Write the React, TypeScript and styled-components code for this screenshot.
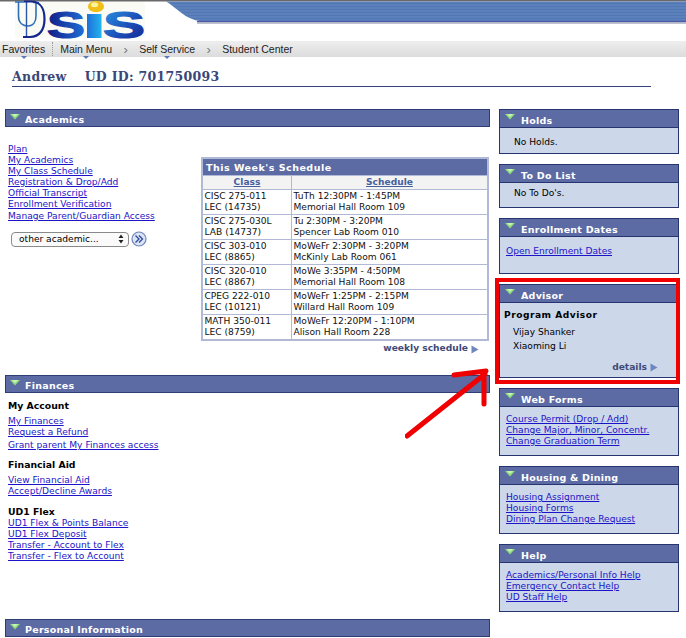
import React from 'react';
import styled, { createGlobalStyle } from 'styled-components';

const GlobalStyle = createGlobalStyle`
  html, body {
    margin: 0;
    padding: 0;
    background: #fff;
    overflow: hidden;
  }
  body {
    font-family: "DejaVu Sans", Verdana, sans-serif;
    font-size: 9.1px;
    line-height: 11px;
    color: #000;
  }
`;

const scheduleRows = [
  ['CISC 275-011', 'LEC (14735)', 'TuTh 12:30PM - 1:45PM', 'Memorial Hall Room 109'],
  ['CISC 275-030L', 'LAB (14737)', 'Tu 2:30PM - 3:20PM', 'Spencer Lab Room 010'],
  ['CISC 303-010', 'LEC (8865)', 'MoWeFr 2:30PM - 3:20PM', 'McKinly Lab Room 061'],
  ['CISC 320-010', 'LEC (8867)', 'MoWe 3:35PM - 4:50PM', 'Memorial Hall Room 108'],
  ['CPEG 222-010', 'LEC (10121)', 'MoWeFr 1:25PM - 2:15PM', 'Willard Hall Room 109'],
  ['MATH 350-011', 'LEC (8759)', 'MoWeFr 12:20PM - 1:10PM', 'Alison Hall Room 228'],
];

const Triangle = () => (
  <svg width="10" height="6" viewBox="0 0 10 6">
    <path d="M0 0H10L5 5.5Z" fill="#8fdc7c" />
    <path d="M2 0H8L5 3Z" fill="#c8f5b8" />
  </svg>
);

const MoreArrow = () => (
  <svg width="8" height="9" viewBox="0 0 8 9">
    <path d="M0.5 0.5L7.5 4.5L0.5 8.5Z" fill="#6f86bd" />
  </svg>
);

const Panel = ({ title, height, children }: { title: string; height?: number; children?: React.ReactNode }) => (
  <PanelBox>
    <PanelHead>
      <Triangle />
      <span>{title}</span>
    </PanelHead>
    <PanelBody $height={height}>{children}</PanelBody>
  </PanelBox>
);

export default function App() {
  return (
    <>
      <GlobalStyle />
      <Header>
        <svg width="686" height="41" viewBox="0 0 686 41">
          <defs>
            <linearGradient id="sisLast" x1="0" y1="0" x2="1" y2="1">
              <stop offset="0" stopColor="#2a9fe8" />
              <stop offset="0.55" stopColor="#1c4fb8" />
              <stop offset="1" stopColor="#14208c" />
            </linearGradient>
            <linearGradient id="sisFirst" x1="0" y1="0" x2="1" y2="0">
              <stop offset="0" stopColor="#121c86" />
              <stop offset="1" stopColor="#1f6fd8" />
            </linearGradient>
            <linearGradient id="sisBar" x1="0" y1="0" x2="1" y2="0">
              <stop offset="0" stopColor="#1f6fd8" />
              <stop offset="1" stopColor="#22b4f0" />
            </linearGradient>
            <pattern id="stripes" width="4" height="3" patternUnits="userSpaceOnUse">
              <rect width="4" height="3" fill="#5b80bc" />
              <rect width="4" height="1" fill="#5278b4" />
            </pattern>
          </defs>
          <rect x="0" y="0" width="686" height="1.5" fill="#6a6a6a" />
          <path d="M166 1.5C180 10 186 21 205 21.5H686V1.5Z" fill="url(#stripes)" />
          <path d="M197 21.5H686" stroke="#4b59a6" strokeWidth="1.4" />
          <path d="M197 23H686" stroke="#a9aebc" strokeWidth="1.4" />
          <rect x="15" y="2" width="130" height="36" fill="#fbfbf6" />
          <path d="M15 2H24M18.5 2V16C18.5 23 23 26 28 26C33 26 36 22 36 16V3M33 2.5H39" fill="none" stroke="#2f6fb8" strokeWidth="1.6" />
          <path d="M26.5 1V37" stroke="#2a55a8" strokeWidth="1.4" />
          <path d="M24 1.5H31C41 1.5 44.5 10 44.5 19C44.5 29 40 37 30 37H23" fill="none" stroke="#16288e" strokeWidth="2.2" />
          <text x="47" y="37.5" fontFamily="Liberation Sans" fontWeight="700" fontSize="36" textLength="38" lengthAdjust="spacingAndGlyphs" fill="url(#sisFirst)" stroke="url(#sisFirst)" strokeWidth="1.2">S</text>
          <rect x="87" y="14" width="14.5" height="24" fill="url(#sisBar)" />
          <ellipse cx="96" cy="6.5" rx="8" ry="5.8" fill="#f0bf18" />
          <ellipse cx="94.5" cy="4.8" rx="3.6" ry="2.5" fill="#fff2a0" />
          <text x="103" y="37.5" fontFamily="Liberation Sans" fontWeight="700" fontSize="36" textLength="42" lengthAdjust="spacingAndGlyphs" fill="url(#sisLast)" stroke="url(#sisLast)" strokeWidth="1.2">S</text>
        </svg>
      </Header>
      <NavBar>
        <NavItem $marker>Favorites</NavItem>
        <NavDivider />
        <NavItem $marker>Main Menu</NavItem>
        <NavChevron>›</NavChevron>
        <NavItem $marker>Self Service</NavItem>
        <NavChevron>›</NavChevron>
        <NavItem>Student Center</NavItem>
      </NavBar>
      <TitleRow>
        <span>Andrew</span>
        <span>UD ID: 701750093</span>
      </TitleRow>
      <Columns>
        <MainColumn>
          <SectionHead>
            <Triangle />
            <span>Academics</span>
          </SectionHead>
          <AcademicsBody>
            <div>
              <LinkList>
                <Link>Plan</Link>
                <Link>My Academics</Link>
                <Link>My Class Schedule</Link>
                <Link>Registration &amp; Drop/Add</Link>
                <Link>Official Transcript</Link>
                <Link>Enrollment Verification</Link>
                <ManageLink>Manage Parent/Guardian Access</ManageLink>
              </LinkList>
              <SelectRow>
                <FakeSelect>
                  <span>other academic...</span>
                  <svg width="6" height="10" viewBox="0 0 6 10">
                    <path d="M3 0.5L5.5 4H0.5ZM3 9.5L0.5 6H5.5Z" fill="#222" />
                  </svg>
                </FakeSelect>
                <svg width="16" height="16" viewBox="0 0 16 16">
                  <circle cx="8" cy="8" r="7" fill="#dbe4f4" stroke="#6f86bd" strokeWidth="1.2" />
                  <path d="M4.5 4.5L8 8L4.5 11.5M8 4.5L11.5 8L8 11.5" fill="none" stroke="#2f4a98" strokeWidth="1.3" />
                </svg>
              </SelectRow>
            </div>
            <ScheduleColumn>
              <ScheduleTable>
                <thead>
                  <tr>
                    <CaptionCell colSpan={2}>This Week's Schedule</CaptionCell>
                  </tr>
                  <tr>
                    <ColumnCell $width={88}>Class</ColumnCell>
                    <ColumnCell>Schedule</ColumnCell>
                  </tr>
                </thead>
                <tbody>
                  {scheduleRows.map(row => (
                    <tr key={row[0]}>
                      <Cell>{row[0]}<br />{row[1]}</Cell>
                      <Cell>{row[2]}<br />{row[3]}</Cell>
                    </tr>
                  ))}
                </tbody>
              </ScheduleTable>
              <WeeklyLink>
                weekly schedule <MoreArrow />
              </WeeklyLink>
            </ScheduleColumn>
          </AcademicsBody>
          <SectionHead>
            <Triangle />
            <span>Finances</span>
          </SectionHead>
          <FinancesBody>
            <GroupTitle $bottom={5}>My Account</GroupTitle>
            <LinkList>
              <Link>My Finances</Link>
              <Link>Request a Refund</Link>
              <SpacedLink>Grant parent My Finances access</SpacedLink>
            </LinkList>
            <GroupTitle $top={8} $bottom={5}>Financial Aid</GroupTitle>
            <LinkList>
              <Link>View Financial Aid</Link>
              <Link>Accept/Decline Awards</Link>
            </LinkList>
            <GroupTitle $top={9} $bottom={1}>UD1 Flex</GroupTitle>
            <LinkList>
              <Link>UD1 Flex &amp; Points Balance</Link>
              <Link>UD1 Flex Deposit</Link>
              <Link>Transfer - Account to Flex</Link>
              <Link>Transfer - Flex to Account</Link>
            </LinkList>
          </FinancesBody>
          <SectionHead>
            <Triangle />
            <span>Personal Information</span>
          </SectionHead>
        </MainColumn>
        <SideColumn>
          <Panel title="Holds" height={25}>
            <Note $top={9}>No Holds.</Note>
          </Panel>
          <Panel title="To Do List" height={24}>
            <Note $top={5}>No To Do's.</Note>
          </Panel>
          <Panel title="Enrollment Dates" height={36}>
            <PanelLinks $top={9}>
              <Link>Open Enrollment Dates</Link>
            </PanelLinks>
          </Panel>
          <Panel title="Advisor" height={74}>
            <AdvisorTitle>Program Advisor</AdvisorTitle>
            <AdvisorName>Vijay Shanker</AdvisorName>
            <AdvisorName>Xiaoming Li</AdvisorName>
            <DetailsLink>
              details <MoreArrow />
            </DetailsLink>
          </Panel>
          <Panel title="Web Forms" height={48}>
            <PanelLinks>
              <Link>Course Permit (Drop / Add)</Link>
              <Link>Change Major, Minor, Concentr.</Link>
              <Link>Change Graduation Term</Link>
            </PanelLinks>
          </Panel>
          <Panel title="Housing &amp; Dining" height={48}>
            <PanelLinks>
              <Link>Housing Assignment</Link>
              <Link>Housing Forms</Link>
              <Link>Dining Plan Change Request</Link>
            </PanelLinks>
          </Panel>
          <Panel title="Help" height={48}>
            <PanelLinks>
              <Link>Academics/Personal Info Help</Link>
              <Link>Emergency Contact Help</Link>
              <Link>UD Staff Help</Link>
            </PanelLinks>
          </Panel>
        </SideColumn>
      </Columns>
      <RedBox />
      <RedArrow width="100" height="80" viewBox="0 0 100 80">
        <path d="M2 72L80 10M49 11L81 7M79 8V40" fill="none" stroke="#f00000" strokeWidth="5" strokeLinecap="round" />
      </RedArrow>
    </>
  );
}

const Header = styled.header`
  height: 41px;
  svg {
    display: block;
    overflow: visible;
  }
`;

const NavBar = styled.nav`
  position: relative;
  height: 16px;
  display: flex;
  align-items: center;
  padding-left: 2px;
  background: linear-gradient(to bottom, #eeeeee, #dcdcdc);
  font-family: "Liberation Sans", Arial, sans-serif;
  font-size: 10.5px;
  color: #222;
`;

const NavItem = styled.span<{ $marker?: boolean }>`
  position: relative;
  white-space: nowrap;
  &::after {
    content: '';
    display: ${p => (p.$marker ? 'block' : 'none')};
    position: absolute;
    left: 50%;
    bottom: -4px;
    margin-left: -3px;
    border: 3px solid transparent;
    border-bottom: 0;
    border-top-color: #5a78b8;
  }
`;

const NavDivider = styled.span`
  height: 14px;
  margin: 0 7px;
  border-left: 1px dotted #999;
`;

const NavChevron = styled.span`
  width: 27px;
  text-align: center;
  color: #777;
  font-size: 13px;
`;

const TitleRow = styled.h1`
  display: flex;
  gap: 18px;
  height: 30px;
  box-sizing: border-box;
  width: 639px;
  margin: 0 0 0 12px;
  padding-top: 12px;
  border-bottom: 1px solid #36417f;
  font-family: "DejaVu Serif", Georgia, serif;
  font-size: 12.5px;
  line-height: 15px;
  font-weight: 700;
  letter-spacing: 0.3px;
  color: #3a4677;
`;

const Columns = styled.main`
  display: grid;
  grid-template-columns: 485px 180px;
  column-gap: 9px;
  padding: 22px 0 0 5px;
`;

const MainColumn = styled.div`
  min-width: 0;
`;

const SideColumn = styled.aside`
  display: flex;
  flex-direction: column;
  gap: 10px;
`;

const SectionHead = styled.div`
  display: flex;
  align-items: center;
  gap: 5px;
  height: 18px;
  box-sizing: border-box;
  padding: 0 0 0 4px;
  background: #5c6ba4;
  border: 1px solid #2f3d77;
  color: #fff;
  font-size: 9.5px;
  font-weight: 700;
  letter-spacing: 0.25px;
  svg {
    margin-top: -3px;
  }
  span {
    margin-top: 3px;
  }
`;

const PanelBox = styled.section`
  border: 1px solid #26356f;
  background: #ccd7ea;
`;

const PanelHead = styled(SectionHead)`
  gap: 6px;
  padding-left: 5px;
  border: 0;
  border-bottom: 1px solid #26356f;
`;

const PanelBody = styled.div<{ $height?: number }>`
  position: relative;
  display: flow-root;
  height: ${p => p.$height ?? 40}px;
  padding: 0 6px;
  box-sizing: border-box;
`;

const Link = styled.a`
  display: block;
  width: fit-content;
  color: #1c14c8;
  text-decoration: underline;
  white-space: nowrap;
`;

const SpacedLink = styled(Link)`
  margin-top: 2px;
`;

const ManageLink = styled(Link)`
  margin-top: 1px;
`;

const LinkList = styled.div``;

const AcademicsBody = styled.div`
  display: flex;
  justify-content: space-between;
  height: 248px;
  padding: 17px 1px 0 3px;
  box-sizing: border-box;
`;

const SelectRow = styled.div`
  display: flex;
  align-items: center;
  gap: 2px;
  margin: 9px 0 0 3px;
`;

const FakeSelect = styled.div`
  display: flex;
  align-items: center;
  justify-content: space-between;
  width: 118px;
  height: 15px;
  box-sizing: border-box;
  padding: 0 4px 0 7px;
  border: 1px solid #8a8a8a;
  border-radius: 4px;
  background: #fafafa;
`;

const ScheduleColumn = styled.div`
  width: 288px;
  margin-top: 13px;
`;

const ScheduleTable = styled.table`
  width: 100%;
  border-collapse: collapse;
  border: 2px solid #b1b9d6;
`;

const CaptionCell = styled.th`
  height: 16px;
  padding: 0 0 0 3px;
  background: #5c6ba4;
  color: #fff;
  text-align: left;
  font-size: 9.5px;
  font-weight: 700;
  letter-spacing: 0.5px;
`;

const ColumnCell = styled.th<{ $width?: number }>`
  width: ${p => (p.$width ? `${p.$width}px` : 'auto')};
  height: 13px;
  padding: 0;
  background: #f3f3f3;
  border: 1px solid #b1b9d6;
  color: #46609c;
  font-size: 9.1px;
  text-decoration: underline;
`;

const Cell = styled.td`
  height: 24px;
  padding: 0 2px 0 1.5px;
  border: 1px solid #b1b9d6;
  color: #111;
  white-space: nowrap;
`;

const WeeklyLink = styled.div`
  display: flex;
  justify-content: flex-end;
  align-items: center;
  gap: 3px;
  margin-top: 2px;
  padding-right: 10px;
  color: #3f4a78;
  font-weight: 700;
  svg {
    margin-top: 2px;
  }
`;

const FinancesBody = styled.div`
  height: 226px;
  padding: 7px 0 0 3px;
  box-sizing: border-box;
`;

const GroupTitle = styled.div<{ $top?: number; $bottom?: number }>`
  margin: ${p => p.$top ?? 0}px 0 ${p => p.$bottom ?? 4}px;
  font-weight: 700;
  font-size: 9.3px;
`;

const Note = styled.div<{ $top?: number }>`
  padding: ${p => p.$top ?? 0}px 0 0 8px;
`;

const PanelLinks = styled.div<{ $top?: number }>`
  padding-top: ${p => p.$top ?? 7}px;
`;

const AdvisorTitle = styled.div`
  margin: 7px 0 6px -2px;
  font-weight: 700;
  letter-spacing: 0.5px;
`;

const AdvisorName = styled.div`
  margin: 0 0 3px 7px;
`;

const DetailsLink = styled.div`
  position: absolute;
  right: 20px;
  bottom: 4px;
  display: flex;
  align-items: center;
  gap: 3px;
  color: #3f4a78;
  font-weight: 700;
`;

const RedBox = styled.div`
  position: absolute;
  left: 495px;
  top: 278px;
  width: 185px;
  height: 106px;
  box-sizing: border-box;
  border: 4px solid #f00000;
`;

const RedArrow = styled.svg`
  position: absolute;
  left: 405px;
  top: 364px;
`;
